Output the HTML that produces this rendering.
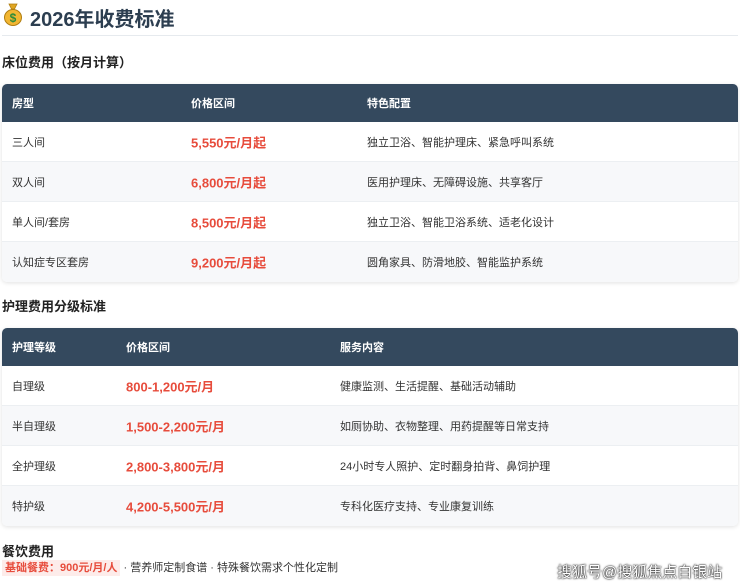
<!DOCTYPE html><html><head><meta charset="utf-8"><style>
body{margin:0;width:740px;height:587px;overflow:hidden;background:#fff;font-family:"Liberation Sans","Noto Sans CJK SC",sans-serif;color:#333;position:relative}
.t{position:absolute;left:30px;top:3px;font-size:20px;font-weight:bold;color:#2c3e50}
.ic{position:absolute;left:3px;top:3px;width:20px;height:23px}
.hr{position:absolute;left:2px;right:2px;top:35px;height:1px;background:#e6eaee}
h3{position:absolute;left:2px;margin:0;font-size:13px;font-weight:bold;color:#222}
.tb{position:absolute;left:2px;width:736px;border-radius:5px;overflow:hidden;box-shadow:0 1px 4px rgba(0,0,0,.12)}
.r{height:40px;position:relative;font-size:11px;color:#333;border-bottom:1px solid #eceff2;box-sizing:border-box}
.r.h{height:38px;background:#34495e;color:#fff;font-weight:bold;border:0}
.r.g{background:#f7f8fa}
.r span{position:absolute;top:50%;transform:translateY(-50%)}
.p{color:#e74c3c;font-weight:bold;font-size:13px}
</style></head><body>
<svg class="ic" viewBox="0 0 20 23"><path d="M6 1h8l-2.5 5h-3z" fill="#e0a622" stroke="#b07d10" stroke-width=".8"/><ellipse cx="10" cy="14.5" rx="8.5" ry="8" fill="#f2b632" stroke="#b07d10"/><text x="10" y="19" font-size="12" text-anchor="middle" fill="#2e8b3a" font-weight="bold" font-family="Liberation Sans">$</text></svg>
<div class="t">2026年收费标准</div>
<div class="hr"></div>
<h3 style="top:52px">床位费用（按月计算）</h3>
<div class="tb" style="top:84px">
<div class="r h"><span style="left:10px">房型</span><span style="left:189px">价格区间</span><span style="left:365px">特色配置</span></div>
<div class="r"><span style="left:10px">三人间</span><span class="p" style="left:189px">5,550元/月起</span><span style="left:365px">独立卫浴、智能护理床、紧急呼叫系统</span></div>
<div class="r g"><span style="left:10px">双人间</span><span class="p" style="left:189px">6,800元/月起</span><span style="left:365px">医用护理床、无障碍设施、共享客厅</span></div>
<div class="r"><span style="left:10px">单人间/套房</span><span class="p" style="left:189px">8,500元/月起</span><span style="left:365px">独立卫浴、智能卫浴系统、适老化设计</span></div>
<div class="r g" style="border:0"><span style="left:10px">认知症专区套房</span><span class="p" style="left:189px">9,200元/月起</span><span style="left:365px">圆角家具、防滑地胶、智能监护系统</span></div>
</div>
<h3 style="top:296px">护理费用分级标准</h3>
<div class="tb" style="top:328px">
<div class="r h"><span style="left:10px">护理等级</span><span style="left:124px">价格区间</span><span style="left:338px">服务内容</span></div>
<div class="r"><span style="left:10px">自理级</span><span class="p" style="left:124px">800-1,200元/月</span><span style="left:338px">健康监测、生活提醒、基础活动辅助</span></div>
<div class="r g"><span style="left:10px">半自理级</span><span class="p" style="left:124px">1,500-2,200元/月</span><span style="left:338px">如厕协助、衣物整理、用药提醒等日常支持</span></div>
<div class="r"><span style="left:10px">全护理级</span><span class="p" style="left:124px">2,800-3,800元/月</span><span style="left:338px">24小时专人照护、定时翻身拍背、鼻饲护理</span></div>
<div class="r g" style="border:0"><span style="left:10px">特护级</span><span class="p" style="left:124px">4,200-5,500元/月</span><span style="left:338px">专科化医疗支持、专业康复训练</span></div>
</div>
<h3 style="top:541px">餐饮费用</h3>
<div style="position:absolute;left:2px;top:559px;font-size:11px;color:#333;white-space:nowrap"><span style="background:#fdecea;color:#e74c3c;font-weight:bold;padding:2px 3px">基础餐费：900元/月/人</span> · 营养师定制食谱 · 特殊餐饮需求个性化定制</div>
<div style="position:absolute;left:557px;top:561px;font-size:15px;color:#fff;text-shadow:0 0 2px #000,0 0 1px #000;white-space:nowrap">搜狐号@搜狐焦点白银站</div>
</body></html>
